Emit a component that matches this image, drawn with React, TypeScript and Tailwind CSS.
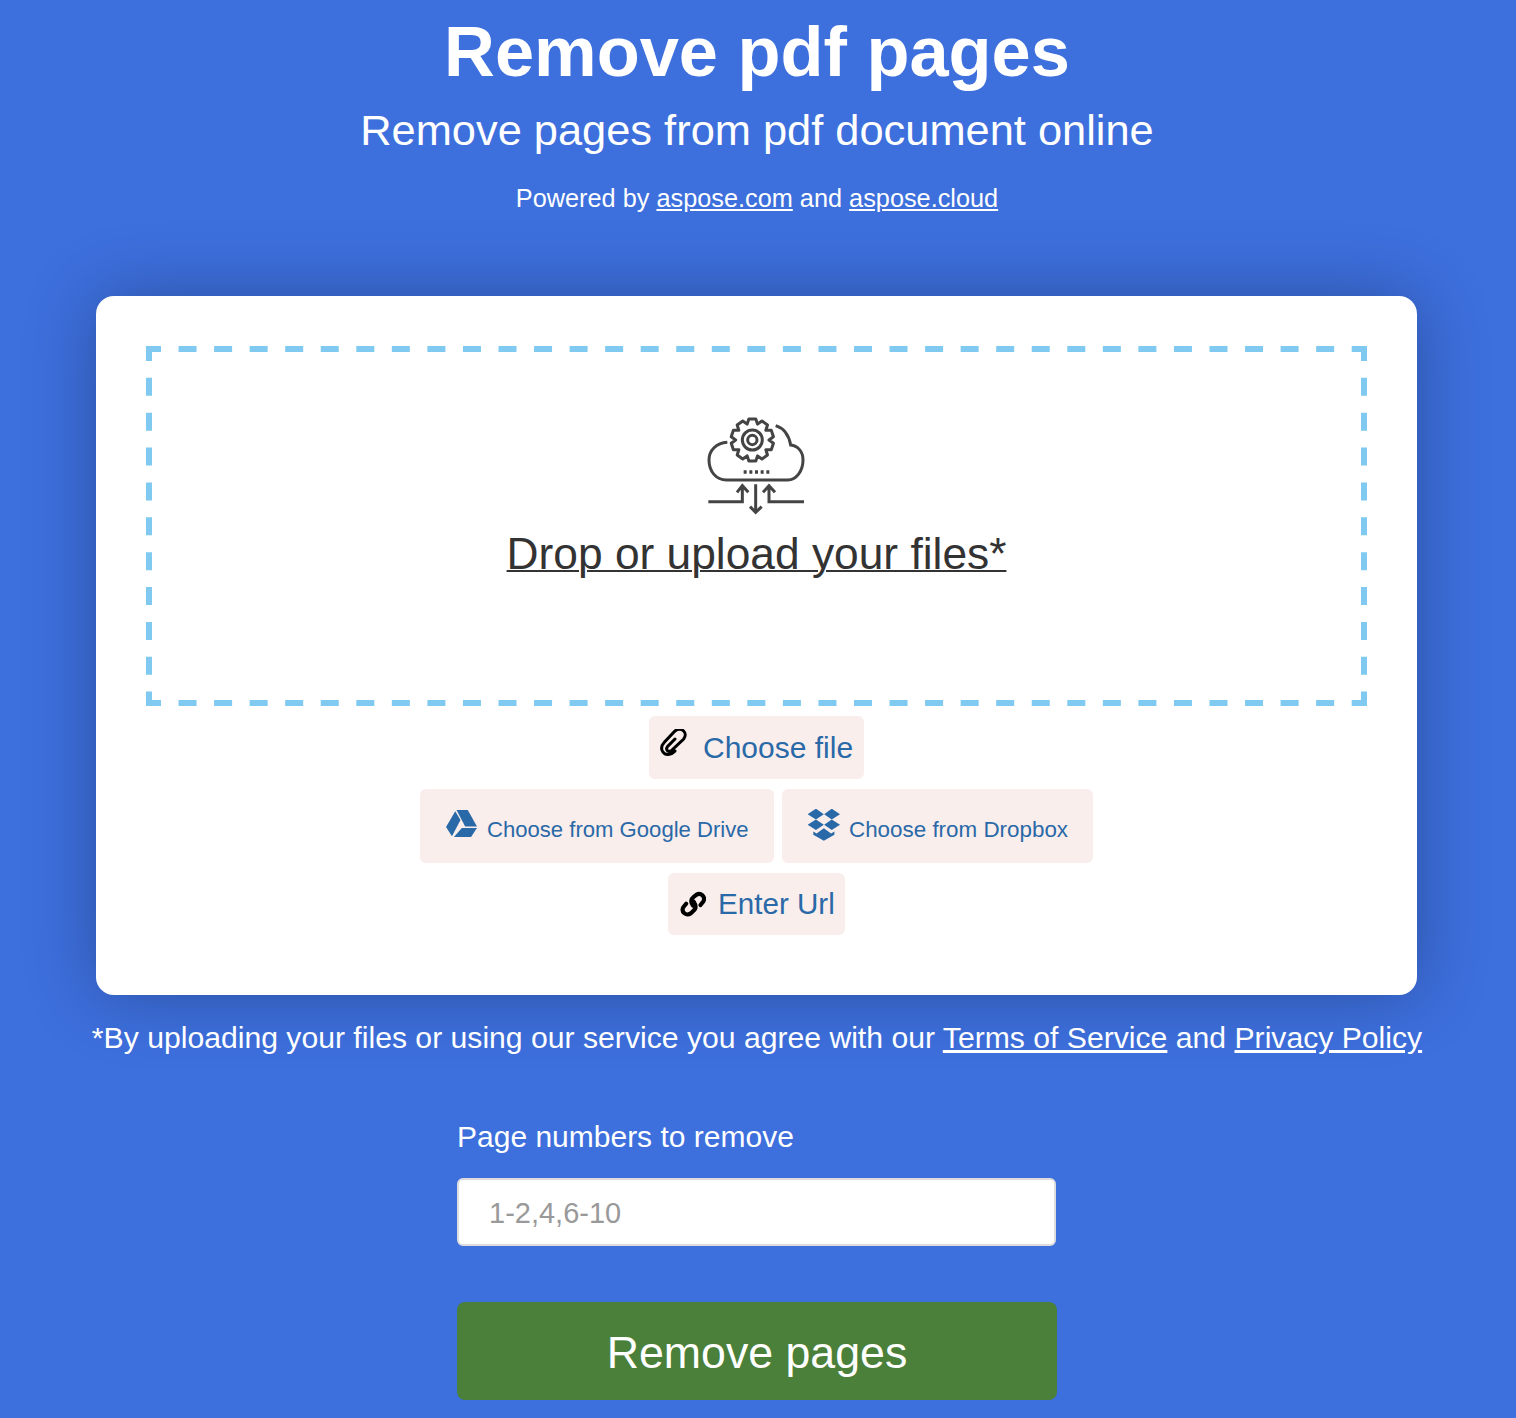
const gearPath = () => {
  const cx = 190;
  const cy = 105;
  const teeth = 10;
  const pts: string[] = [];
  for (let i = 0; i < teeth; i++) {
    const step = (Math.PI * 2) / teeth;
    const a = i * step - Math.PI / 2;
    const corners: [number, number][] = [
      [-0.5, 50],
      [-0.26, 64],
      [0.26, 64],
      [0.5, 50],
    ];
    corners.forEach(([off, r]) => {
      const t = a + off * step;
      pts.push(`${(cx + r * Math.cos(t)).toFixed(1)} ${(cy + r * Math.sin(t)).toFixed(1)}`);
    });
  }
  return `M${pts.join("L")}Z`;
};

const CloudIcon = () => (
  <svg viewBox="0 0 405 375" className="w-[135px] h-[125px]" fill="none" stroke="#444" strokeWidth="9">
    <path d="M115 112C82 114 60 136 60 165C60 200 82 225 112 225L296 225C322 225 342 198 342 165C342 138 325 122 305 120C300 92 285 70 260 62" />
    <path d={gearPath()} strokeLinejoin="round" />
    <circle cx="190" cy="105" r="30" />
    <circle cx="190" cy="105" r="14" />
    <path d="M164 201H244" strokeWidth="11" strokeDasharray="9 8" />
    <path d="M58 290H160V242M144 262L160 242L178 262" />
    <path d="M200 238V322M183 305L200 322L218 305" />
    <path d="M345 290H240V242M222 262L240 242L258 262" />
  </svg>
);

const DashedFrame = () => (
  <svg className="absolute inset-0 w-full h-full" fill="none" stroke="#80c9f0" strokeWidth="6" strokeDashoffset="3">
    <line x1="0" y1="3" x2="1221" y2="3" strokeDasharray="18 17.55" />
    <line x1="0" y1="357" x2="1221" y2="357" strokeDasharray="18 17.55" />
    <line x1="3" y1="0" x2="3" y2="360" strokeDasharray="18 16.86" />
    <line x1="1218" y1="0" x2="1218" y2="360" strokeDasharray="18 16.86" />
  </svg>
);

const PaperclipIcon = () => (
  <svg viewBox="28 28 84 84" className="w-[28px] h-[28px] -mt-[9px]" fill="none" stroke="#000" strokeWidth="9" strokeLinecap="round">
    <path d="M76 58L54 80C46 90 56 100 66 92L102 58C116 40 96 20 76 34L44 68C26 88 42 112 66 102L76 94" />
  </svg>
);

const LinkIcon = () => (
  <svg viewBox="30 35 76 76" className="w-[26px] h-[26px]" fill="none" stroke="#000" strokeWidth="12" strokeLinecap="round">
    <path d="M68 78C60 66 62 58 70 52L78 46C90 38 106 52 98 66L90 76" />
    <path d="M70 66C78 78 76 88 68 94L62 100C48 110 32 96 40 82L48 72" />
  </svg>
);

const DriveIcon = () => (
  <svg viewBox="18 30 94 82" className="w-[31px] h-[27px] -mt-[13px]" fill="#2a69a8">
    <polygon points="50,30 84,30 112,80 76,80" />
    <polygon points="18,82 46,34 62,60 36,110" />
    <polygon points="66,85 112,85 94,112 42,112" />
  </svg>
);

const DropboxIcon = () => (
  <svg viewBox="26 26 97 97" className="w-[32px] h-[32px] -mt-[11px]" fill="#2a69a8">
    <polygon points="25,42 50,25 74,42 50,58" />
    <polygon points="75,42 98,25 123,42 98,58" />
    <polygon points="25,74 50,58 74,74 50,90" />
    <polygon points="75,74 98,58 123,74 98,90" />
    <polygon points="42,94 52,100 74,84 96,100 106,94 106,104 74,122 42,104" />
  </svg>
);

export default function App() {
  return (
    <div className="min-h-[1418px] pr-[2px] bg-[#3d6fdd] text-white text-center font-['Liberation_Sans',Arial,sans-serif] overflow-hidden">
      <h1 className="text-[70.4px] font-bold leading-[80px] pt-[12px]">Remove pdf pages</h1>
      <h2 className="text-[43.4px] leading-[50px] mt-[13px]">Remove pages from pdf document online</h2>
      <p className="text-[25.3px] leading-[30px] mt-[28px]">
        Powered by <a className="underline">aspose.com</a> and <a className="underline">aspose.cloud</a>
      </p>

      <div className="mt-[83px] ml-[96px] w-[1321px] h-[699px] bg-white rounded-[18px] shadow-[0_0_70px_rgba(0,0,0,0.28)] pt-[50px] px-[50px]">
        <div className="relative h-[360px] flex flex-col items-center pt-[59px]">
          <DashedFrame />
          <CloudIcon />
          <a className="underline decoration-[2px] text-[#333] text-[44.3px] leading-[52px] -mt-[2px]">Drop or upload your files*</a>
        </div>
        <div className="flex flex-col items-center gap-[10px] mt-[10px]">
          <button className="h-[63px] w-[215px] pl-[10px] rounded-md bg-[#f9eeec] flex items-center gap-[16px] text-[#2a69a8] text-[30px]">
            <PaperclipIcon />
            Choose file
          </button>
          <div className="flex gap-[8px]">
            <button className="h-[74px] w-[354px] pl-[26px] pt-[8px] rounded-md bg-[#f9eeec] flex items-center gap-[10px] text-[#2a69a8] text-[22.1px]">
              <DriveIcon />
              Choose from Google Drive
            </button>
            <button className="h-[74px] w-[311px] pl-[26px] pt-[8px] rounded-md bg-[#f9eeec] flex items-center gap-[9px] text-[#2a69a8] text-[22.4px]">
              <DropboxIcon />
              Choose from Dropbox
            </button>
          </div>
          <button className="h-[62px] w-[177px] pl-[12px] rounded-md bg-[#f9eeec] flex items-center gap-[12px] text-[#2a69a8] text-[29.6px]">
            <LinkIcon />
            Enter Url
          </button>
        </div>
      </div>

      <p className="text-[30.16px] leading-[36px] mt-[25px]">
        *By uploading your files or using our service you agree with our <a className="underline">Terms of Service</a> and <a className="underline">Privacy Policy</a>
      </p>

      <div className="w-[600px] ml-[457px] mt-[63px] text-left">
        <label className="block text-[30px] leading-[36px]">Page numbers to remove</label>
        <input
          placeholder="1-2,4,6-10"
          className="mt-[23px] block w-[599px] h-[68px] pt-[2px] bg-white rounded-md border-2 border-[#ddd] px-[30px] text-[29px] placeholder:text-[#999]"
        />
        <button className="mt-[56px] block w-full h-[98px] pt-[4px] rounded-lg bg-[#4a8039] text-center text-[44.7px]">Remove pages</button>
      </div>
    </div>
  );
}
